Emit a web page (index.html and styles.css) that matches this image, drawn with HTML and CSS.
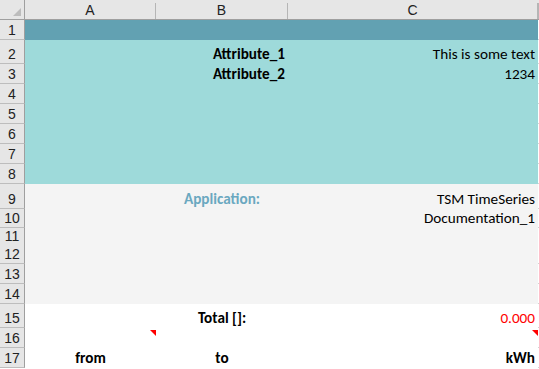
FILE: index.html
```html
<!DOCTYPE html>
<html lang="en">
<head>
    <meta charset="UTF-8">
    <title>Sheet1</title>
    <link rel="stylesheet" href="styles.css">
</head>
<body>
    <div class="sheet">
        <div class="row col-head">
            <div class="corner"><span class="select-all"></span></div>
            <div class="col-label">A</div>
            <div class="col-label">B</div>
            <div class="col-label">C</div>
            <div class="col-label"></div>
        </div>

        <div class="row h20 band-dark">
            <div class="row-label">1</div>
            <div class="cell"></div><div class="cell"></div><div class="cell"></div><div class="cell edge"></div>
        </div>
        <div class="row h24 band-light">
            <div class="row-label">2</div>
            <div class="cell"></div>
            <div class="cell right bold">Attribute_1</div>
            <div class="cell right">This is some text</div>
            <div class="cell edge"></div>
        </div>
        <div class="row h20 band-light">
            <div class="row-label">3</div>
            <div class="cell"></div>
            <div class="cell right bold">Attribute_2</div>
            <div class="cell right">1234</div>
            <div class="cell edge"></div>
        </div>
        <div class="row h20 band-light">
            <div class="row-label">4</div>
            <div class="cell"></div><div class="cell"></div><div class="cell"></div><div class="cell edge"></div>
        </div>
        <div class="row h20 band-light">
            <div class="row-label">5</div>
            <div class="cell"></div><div class="cell"></div><div class="cell"></div><div class="cell edge"></div>
        </div>
        <div class="row h20 band-light">
            <div class="row-label">6</div>
            <div class="cell"></div><div class="cell"></div><div class="cell"></div><div class="cell edge"></div>
        </div>
        <div class="row h20 band-light">
            <div class="row-label">7</div>
            <div class="cell"></div><div class="cell"></div><div class="cell"></div><div class="cell edge"></div>
        </div>
        <div class="row h20 band-light">
            <div class="row-label">8</div>
            <div class="cell"></div><div class="cell"></div><div class="cell"></div><div class="cell edge"></div>
        </div>

        <div class="row h25 band-grey">
            <div class="row-label">9</div>
            <div class="cell"></div>
            <div class="cell center bold app">Application:</div>
            <div class="cell right">TSM TimeSeries</div>
            <div class="cell edge"></div>
        </div>
        <div class="row h19 band-grey">
            <div class="row-label">10</div>
            <div class="cell"></div>
            <div class="cell"></div>
            <div class="cell right">Documentation_1</div>
            <div class="cell edge"></div>
        </div>
        <div class="row h16 band-grey">
            <div class="row-label">11</div>
            <div class="cell"></div><div class="cell"></div><div class="cell"></div><div class="cell edge"></div>
        </div>
        <div class="row h20 band-grey">
            <div class="row-label">12</div>
            <div class="cell"></div><div class="cell"></div><div class="cell"></div><div class="cell edge"></div>
        </div>
        <div class="row h20 band-grey">
            <div class="row-label">13</div>
            <div class="cell"></div><div class="cell"></div><div class="cell"></div><div class="cell edge"></div>
        </div>
        <div class="row h20 band-grey">
            <div class="row-label">14</div>
            <div class="cell"></div><div class="cell"></div><div class="cell"></div><div class="cell edge"></div>
        </div>

        <div class="row h24">
            <div class="row-label">15</div>
            <div class="cell"></div>
            <div class="cell center bold">Total []:</div>
            <div class="cell right red">0.000</div>
            <div class="cell edge"></div>
        </div>
        <div class="row h20">
            <div class="row-label">16</div>
            <div class="cell comment"></div>
            <div class="cell"></div>
            <div class="cell comment"></div>
            <div class="cell edge"></div>
        </div>
        <div class="row h20">
            <div class="row-label">17</div>
            <div class="cell center bold">from</div>
            <div class="cell center bold">to</div>
            <div class="cell right bold">kWh</div>
            <div class="cell edge"></div>
        </div>
    </div>
</body>
</html>
```

FILE: styles.css
```css
* {
    margin: 0;
    padding: 0;
    box-sizing: border-box;
}

body {
    background-color: #ffffff;
    overflow: hidden;
}

.sheet {
    width: 539px;
    display: flex;
    flex-direction: column;
}

.row {
    display: grid;
    grid-template-columns: 25px 131px 132px 250px 1px;
}

.h16 { height: 16px; }
.h19 { height: 19px; }
.h20 { height: 20px; }
.h24 { height: 24px; }
.h25 { height: 25px; }

/* headers */
.col-head {
    height: 20px;
    background-color: #e6e6e6;
    border-bottom: 1px solid #9f9f9f;
}

.corner {
    position: relative;
    border-right: 1px solid #9f9f9f;
}

.select-all {
    position: absolute;
    right: 3px;
    bottom: 3px;
    width: 0;
    height: 0;
    border-left: 8px solid transparent;
    border-bottom: 8px solid #bcbcbc;
}

.col-label {
    display: flex;
    align-items: center;
    justify-content: center;
    font-family: "Liberation Sans", Arial, sans-serif;
    font-size: 14px;
    color: #222;
    border-right: 1px solid #c6c6c6;
    border-image: linear-gradient(to bottom, transparent 4px, #b5b5b5 4px) 1;
    border-top: 0;
    border-bottom: 0;
    border-left: 0;
    padding-top: 1px;
}

.row-label {
    display: flex;
    align-items: flex-end;
    justify-content: center;
    padding-bottom: 1px;
    background-color: #e6e6e6;
    border-right: 1px solid #9f9f9f;
    border-bottom: 1px solid #bdbdbd;
    font-family: "Liberation Sans", Arial, sans-serif;
    font-size: 14px;
    line-height: 16px;
    color: #222;
}

/* cells */
.cell {
    display: flex;
    align-items: flex-end;
    padding: 0 3px 1px 3px;
    font-family: Carlito, Calibri, Lato, sans-serif;
    font-size: 15.2px;
    line-height: 18px;
    color: #000;
    white-space: nowrap;
    position: relative;
}

.band-dark .cell { background-color: #62a1b2; }
.band-light .cell { background-color: #9edada; }
.band-grey .cell { background-color: #f4f4f4; }

.row .edge {
    background-color: #fff;
    border-bottom: 1px solid #d4d4d4;
    padding: 0;
}

.right { justify-content: flex-end; }
.center { justify-content: center; }
.bold { font-weight: bold; }
.app { color: #6aa8c0; }
.red { color: #ff0000; }

.comment::after {
    content: "";
    position: absolute;
    top: 2px;
    right: 0;
    width: 0;
    height: 0;
    border-left: 6px solid transparent;
    border-top: 6px solid #ff0000;
}
```
